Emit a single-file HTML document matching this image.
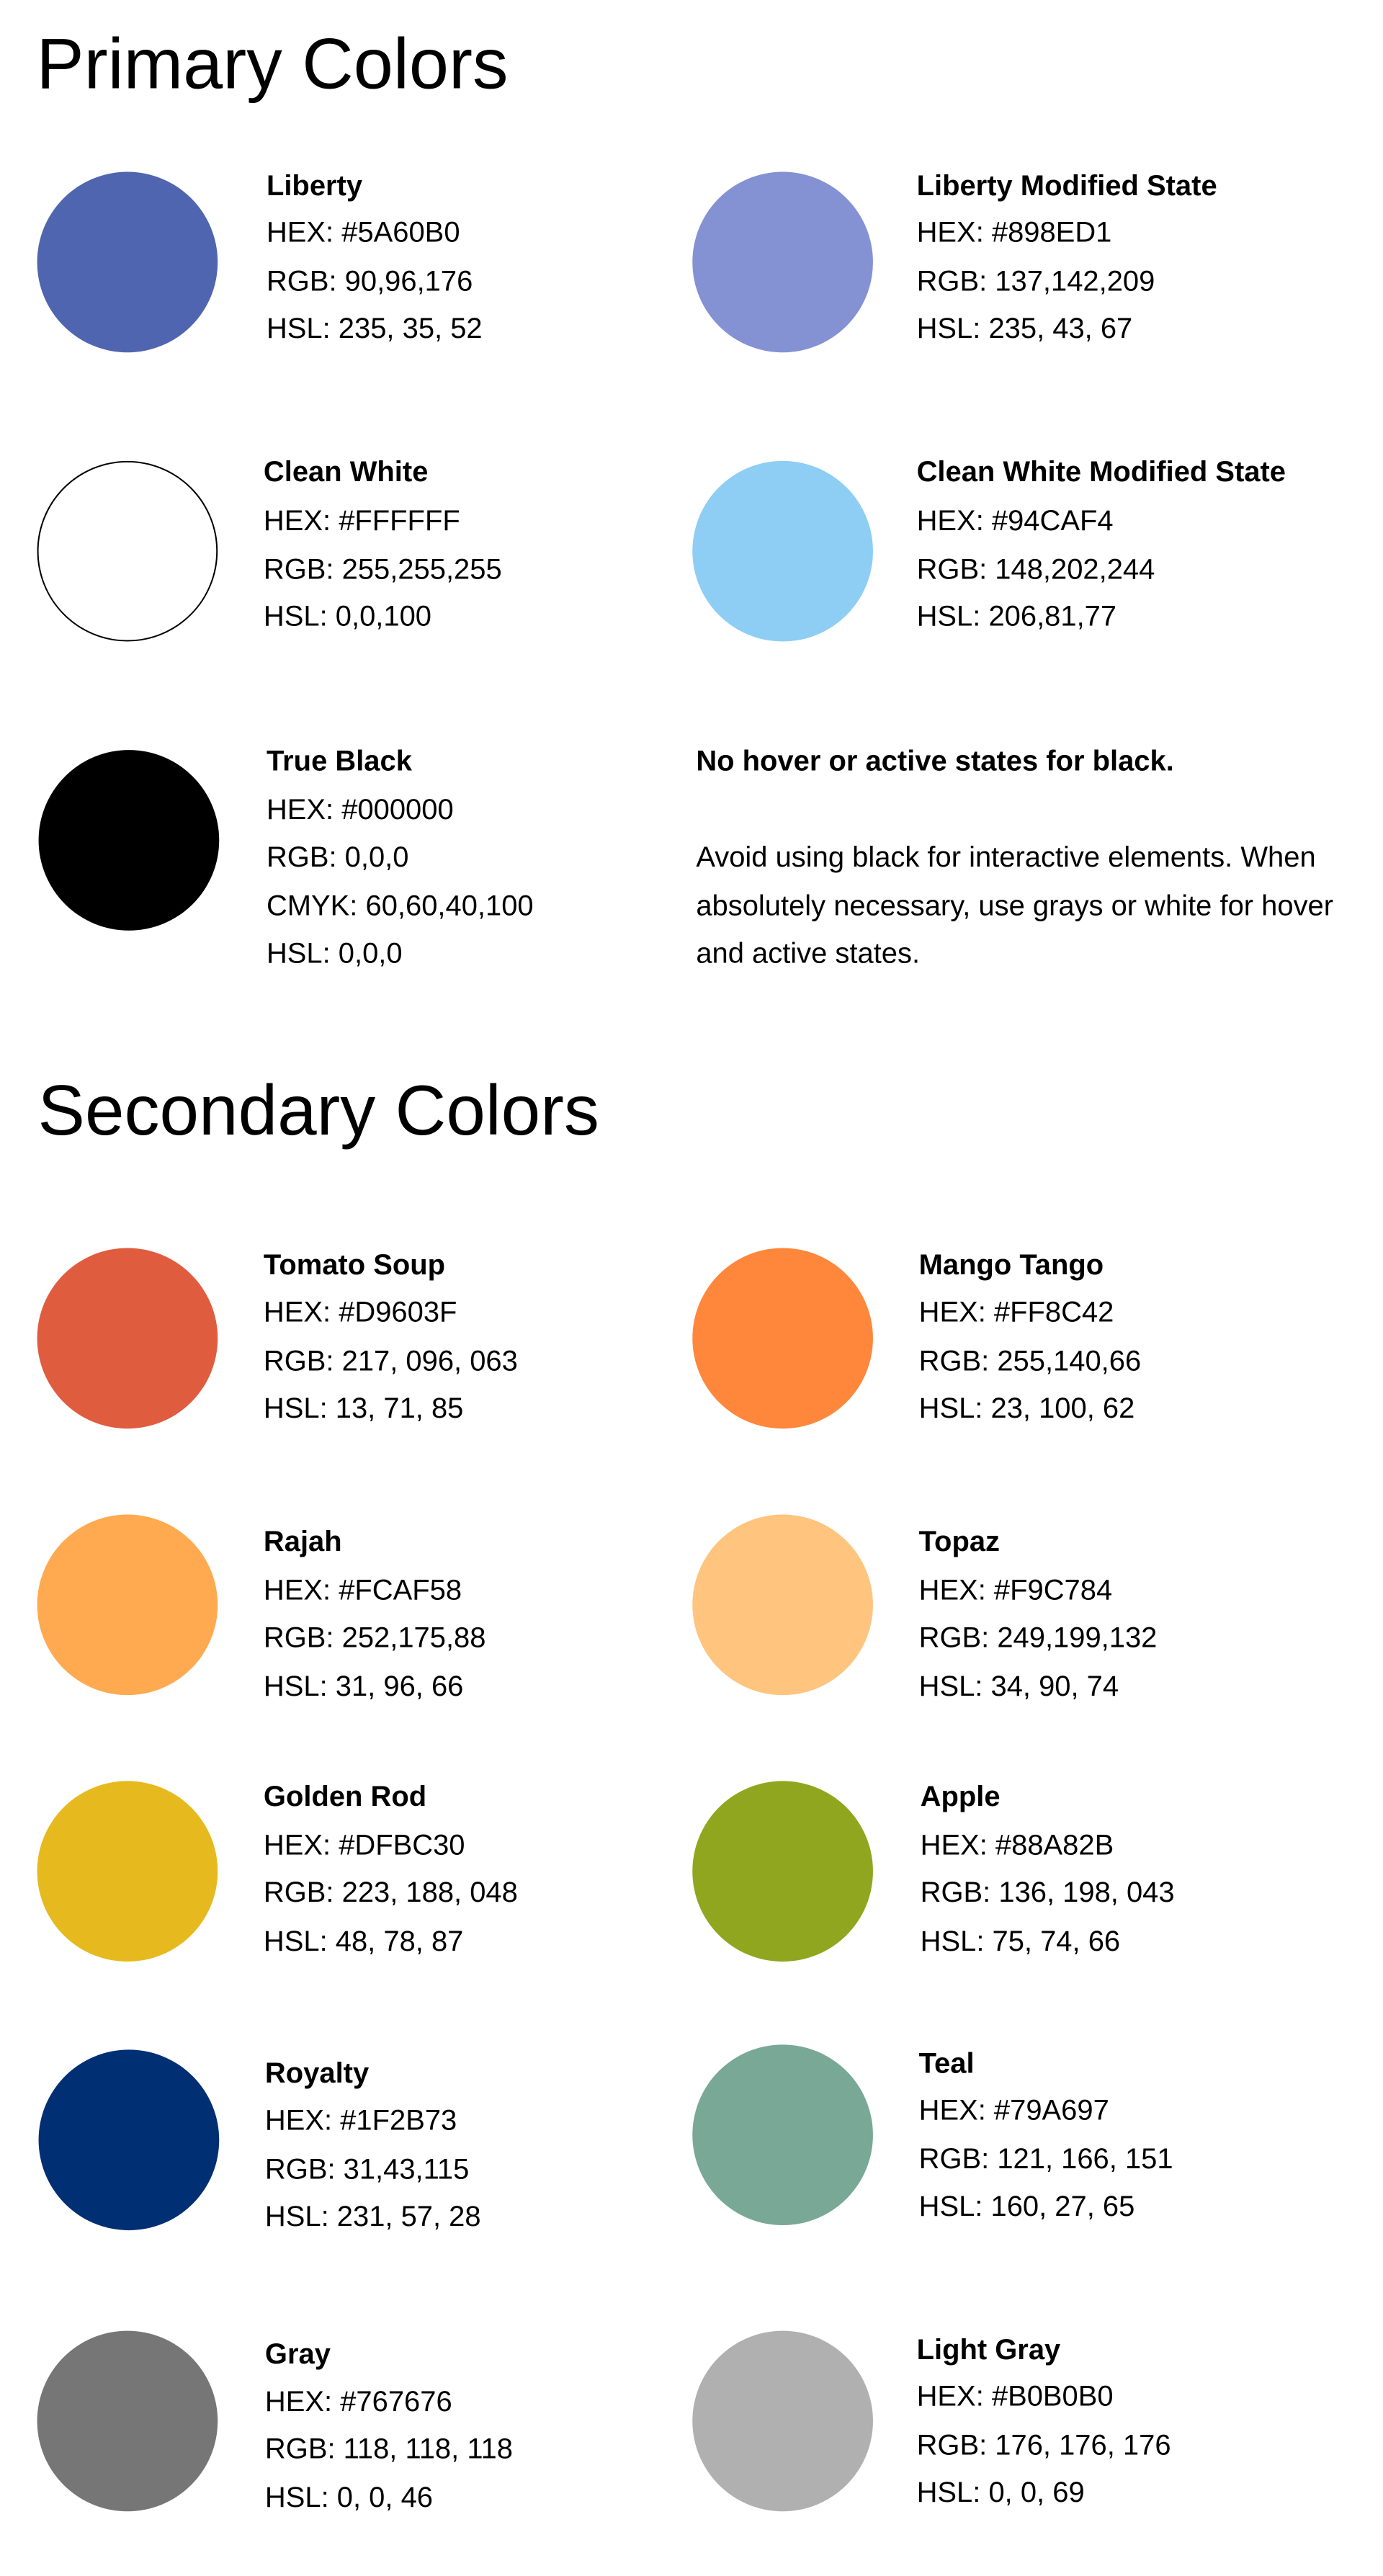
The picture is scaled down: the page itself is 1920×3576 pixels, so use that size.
<!DOCTYPE html>
<html><head><meta charset="utf-8"><style>
html,body{margin:0;padding:0;background:#fff;}
body{width:1920px;height:3538px;position:relative;overflow:hidden;font-family:"Liberation Sans",sans-serif;color:#000;}
#w{position:absolute;left:0;top:0;width:1920px;height:3538px;transform:scale(1.0108);transform-origin:0 0;}
.h{position:absolute;font-weight:400;white-space:nowrap;line-height:1;}
.c{position:absolute;width:248px;height:248px;border-radius:50%;}
.t{position:absolute;font-size:39.5px;line-height:50px;white-space:nowrap;}
.b{font-weight:700;}
</style></head><body><div id="w">
<div class="h" style="left:50px;top:38px;font-size:98px;">Primary Colors</div>
<div class="h" style="left:52px;top:1476px;font-size:97px;">Secondary Colors</div>

<div class="c" style="left:51px;top:236px;background:#5065b0"></div>
<div class="t b" style="left:366px;top:230px">Liberty</div>
<div class="t" style="left:366px;top:294px">HEX: #5A60B0</div>
<div class="t" style="left:366px;top:361px">RGB: 90,96,176</div>
<div class="t" style="left:366px;top:426px">HSL: 235, 35, 52</div>

<div class="c" style="left:951px;top:236px;background:#8492d4"></div>
<div class="t b" style="left:1259px;top:230px">Liberty Modified State</div>
<div class="t" style="left:1259px;top:294px">HEX: #898ED1</div>
<div class="t" style="left:1259px;top:361px">RGB: 137,142,209</div>
<div class="t" style="left:1259px;top:426px">HSL: 235, 43, 67</div>

<div class="c" style="left:51px;top:633px;border:2px solid #000;box-sizing:border-box;background:#fff"></div>
<div class="t b" style="left:362px;top:623px">Clean White</div>
<div class="t" style="left:362px;top:690px">HEX: #FFFFFF</div>
<div class="t" style="left:362px;top:757px">RGB: 255,255,255</div>
<div class="t" style="left:362px;top:821px">HSL: 0,0,100</div>

<div class="c" style="left:951px;top:633px;background:#8ecdf4"></div>
<div class="t b" style="left:1259px;top:623px">Clean White Modified State</div>
<div class="t" style="left:1259px;top:690px">HEX: #94CAF4</div>
<div class="t" style="left:1259px;top:757px">RGB: 148,202,244</div>
<div class="t" style="left:1259px;top:821px">HSL: 206,81,77</div>

<div class="c" style="left:53px;top:1030px;background:#000"></div>
<div class="t b" style="left:366px;top:1020px">True Black</div>
<div class="t" style="left:366px;top:1087px">HEX: #000000</div>
<div class="t" style="left:366px;top:1152px">RGB: 0,0,0</div>
<div class="t" style="left:366px;top:1219px">CMYK: 60,60,40,100</div>
<div class="t" style="left:366px;top:1284px">HSL: 0,0,0</div>

<div class="t b" style="left:956px;top:1020px">No hover or active states for black.</div>
<div class="t" style="left:956px;top:1152px">Avoid using black for interactive elements. When</div>
<div class="t" style="left:956px;top:1219px">absolutely necessary, use grays or white for hover</div>
<div class="t" style="left:956px;top:1284px">and active states.</div>

<div class="c" style="left:51px;top:1714px;background:#e05c3e"></div>
<div class="t b" style="left:362px;top:1712px">Tomato Soup</div>
<div class="t" style="left:362px;top:1777px">HEX: #D9603F</div>
<div class="t" style="left:362px;top:1844px">RGB: 217, 096, 063</div>
<div class="t" style="left:362px;top:1909px">HSL: 13, 71, 85</div>

<div class="c" style="left:951px;top:1714px;background:#ff873b"></div>
<div class="t b" style="left:1262px;top:1712px">Mango Tango</div>
<div class="t" style="left:1262px;top:1777px">HEX: #FF8C42</div>
<div class="t" style="left:1262px;top:1844px">RGB: 255,140,66</div>
<div class="t" style="left:1262px;top:1909px">HSL: 23, 100, 62</div>

<div class="c" style="left:51px;top:2080px;background:#ffaa50"></div>
<div class="t b" style="left:362px;top:2092px">Rajah</div>
<div class="t" style="left:362px;top:2159px">HEX: #FCAF58</div>
<div class="t" style="left:362px;top:2224px">RGB: 252,175,88</div>
<div class="t" style="left:362px;top:2291px">HSL: 31, 96, 66</div>

<div class="c" style="left:951px;top:2080px;background:#ffc47e"></div>
<div class="t b" style="left:1262px;top:2092px">Topaz</div>
<div class="t" style="left:1262px;top:2159px">HEX: #F9C784</div>
<div class="t" style="left:1262px;top:2224px">RGB: 249,199,132</div>
<div class="t" style="left:1262px;top:2291px">HSL: 34, 90, 74</div>

<div class="c" style="left:51px;top:2446px;background:#e6b91e"></div>
<div class="t b" style="left:362px;top:2442px">Golden Rod</div>
<div class="t" style="left:362px;top:2509px">HEX: #DFBC30</div>
<div class="t" style="left:362px;top:2574px">RGB: 223, 188, 048</div>
<div class="t" style="left:362px;top:2641px">HSL: 48, 78, 87</div>

<div class="c" style="left:951px;top:2446px;background:#8fa61e"></div>
<div class="t b" style="left:1264px;top:2442px">Apple</div>
<div class="t" style="left:1264px;top:2509px">HEX: #88A82B</div>
<div class="t" style="left:1264px;top:2574px">RGB: 136, 198, 043</div>
<div class="t" style="left:1264px;top:2641px">HSL: 75, 74, 66</div>

<div class="c" style="left:53px;top:2815px;background:#002f73"></div>
<div class="t b" style="left:364px;top:2822px">Royalty</div>
<div class="t" style="left:364px;top:2887px">HEX: #1F2B73</div>
<div class="t" style="left:364px;top:2954px">RGB: 31,43,115</div>
<div class="t" style="left:364px;top:3019px">HSL: 231, 57, 28</div>

<div class="c" style="left:951px;top:2808px;background:#79a897"></div>
<div class="t b" style="left:1262px;top:2809px">Teal</div>
<div class="t" style="left:1262px;top:2873px">HEX: #79A697</div>
<div class="t" style="left:1262px;top:2940px">RGB: 121, 166, 151</div>
<div class="t" style="left:1262px;top:3005px">HSL: 160, 27, 65</div>

<div class="c" style="left:51px;top:3201px;background:#767676"></div>
<div class="t b" style="left:364px;top:3208px">Gray</div>
<div class="t" style="left:364px;top:3273px">HEX: #767676</div>
<div class="t" style="left:364px;top:3338px">RGB: 118, 118, 118</div>
<div class="t" style="left:364px;top:3405px">HSL: 0, 0, 46</div>

<div class="c" style="left:951px;top:3201px;background:#b0b0b0"></div>
<div class="t b" style="left:1259px;top:3202px">Light Gray</div>
<div class="t" style="left:1259px;top:3266px">HEX: #B0B0B0</div>
<div class="t" style="left:1259px;top:3333px">RGB: 176, 176, 176</div>
<div class="t" style="left:1259px;top:3398px">HSL: 0, 0, 69</div>
</div></body></html>
